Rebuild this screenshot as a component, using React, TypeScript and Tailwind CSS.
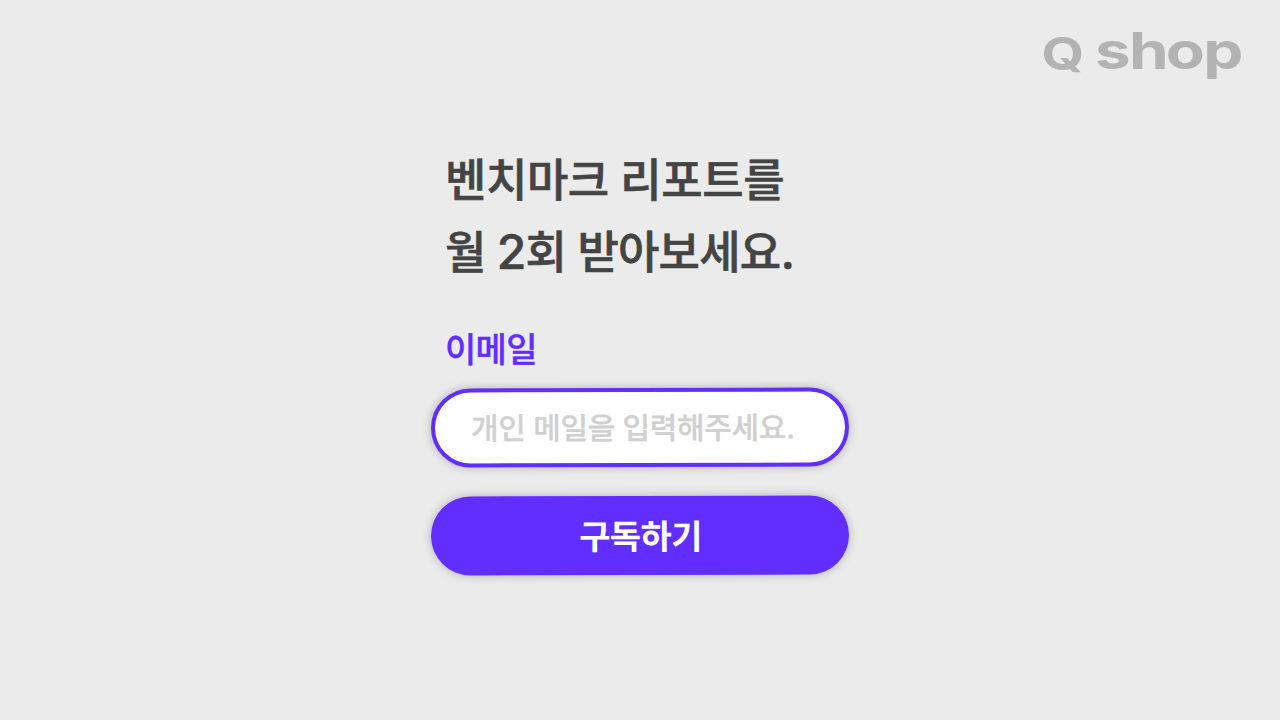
import React from 'react';

const Logo: React.FC = () => (
  <svg
    width="212"
    height="76"
    viewBox="0 0 212 76"
    fill="#b3b3b3"
    className="overflow-visible font-['Inter',sans-serif] font-bold"
    aria-label="Q shop"
  >
    <text transform="translate(1.5 53.7) scale(1.22 1)" fontSize="45">Q</text>
    <text transform="translate(0 53) scale(1.25 1)" x="44 71.2 100.6 130.6" fontSize="51">shop</text>
  </svg>
);

const App: React.FC = () => {
  return (
    <main className="relative flex h-screen w-full justify-center overflow-hidden bg-[#ebebeb] font-['Inter','Noto_Sans_CJK_KR',sans-serif]">
      <header className="absolute right-[28px] top-4">
        <Logo />
      </header>

      <form className="w-[418px] pt-[145px]" onSubmit={(e) => e.preventDefault()}>
        <h1 className="whitespace-nowrap pl-[14px] text-[45px] font-medium leading-[72px] tracking-[-0.45px] text-[#444] [-webkit-text-stroke:0.6px_#444]">
          <span className="block h-[71px]">벤치마크 리포트를</span>
          <span className="block h-[72px] tracking-[-0.8px]">
            월 <span className="text-[48px]">2</span>회 받아보세요<span className="text-[48px]">.</span>
          </span>
        </h1>

        <label
          htmlFor="email"
          className="mt-[37px] block pl-[14px] text-[34px] font-medium leading-[50px] tracking-[-0.7px] text-[#612eff] [-webkit-text-stroke:0.4px_#612eff]"
        >
          이메일
        </label>

        <input
          id="email"
          type="email"
          placeholder="개인 메일을 입력해주세요."
          className="mt-[13px] block h-[79px] w-full -rotate-[0.15deg] rounded-full border-4 border-[#612eff] bg-white pl-[36px] text-[30px] font-medium tracking-[-0.35px] shadow-[0_0_10px_rgba(0,0,0,0.25)] outline-none placeholder:text-[#d0d0d0] placeholder:[-webkit-text-stroke:0.3px_#d0d0d0]"
        />

        <button
          type="submit"
          className="mt-[29px] block h-[79px] w-full -rotate-[0.15deg] rounded-full bg-[#612eff] pl-px pt-0.5 text-[34px] font-bold tracking-[-0.6px] text-white shadow-[0_0_10px_rgba(0,0,0,0.25)]"
        >
          구독하기
        </button>
      </form>
    </main>
  );
};

export default App;
